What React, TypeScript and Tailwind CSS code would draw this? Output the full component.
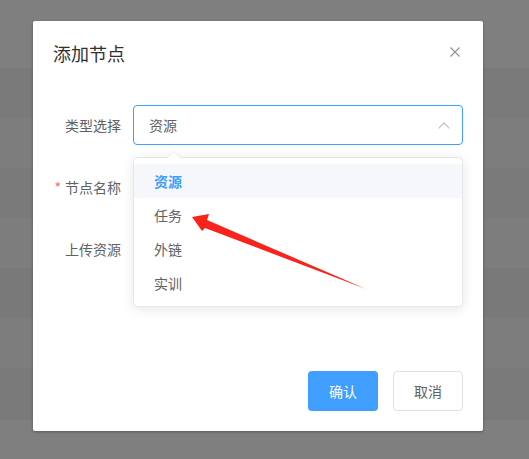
import React from "react";

const bands = [
  { h: "h-[68px]", c: "bg-[#7f7f7f]" },
  { h: "h-[50px]", c: "bg-[#7a7a7a]" },
  { h: "h-[50px]", c: "bg-[#7d7d7d]" },
  { h: "h-[50px]", c: "bg-[#7a7a7a]" },
  { h: "h-[50px]", c: "bg-[#7d7d7d]" },
  { h: "h-[50px]", c: "bg-[#797979]" },
  { h: "h-[50px]", c: "bg-[#7d7d7d]" },
  { h: "h-[52px]", c: "bg-[#7a7a7a]" },
  { h: "flex-1", c: "bg-[#7f7f7f]" },
];

const options = ["资源", "任务", "外链", "实训"];

export default function App() {
  return (
    <div
      className="relative w-[529px] h-[459px] overflow-hidden flex flex-col"
      style={{ fontFamily: '"Helvetica Neue", "Noto Sans CJK SC", "Noto Sans", sans-serif' }}
    >
      {bands.map((b, i) => (
        <div key={i} className={`${b.h} ${b.c} w-full`} />
      ))}

      {/* Dialog */}
      <div className="absolute left-[33px] top-[21px] w-[450px] h-[410px] bg-white rounded-[2px] shadow-[0_1px_3px_rgba(0,0,0,0.3)] flex flex-col">
        <div className="relative px-5 pt-5 pb-[10px]">
          <div className="text-[18px] leading-6 text-[#303133]">添加节点</div>
          <svg
            className="absolute left-[417px] top-[26px]"
            width="10"
            height="10"
            viewBox="0 0 10 10"
          >
            <path d="M0.5 0.5 L9.5 9.5 M9.5 0.5 L0.5 9.5" stroke="#909399" strokeWidth="1.2" fill="none" />
          </svg>
        </div>

        <div className="px-5 pt-[30px] flex flex-col gap-[22px]">
          {/* Row 1 */}
          <div className="flex h-10">
            <div className="w-20 pr-3 text-right text-sm leading-10 text-[#606266]">类型选择</div>
            <div className="relative w-[330px] h-10">
              <div className="h-10 border border-[#409EFF] rounded-[4px] flex items-center justify-between pl-[15px] pr-[12px]">
                <span className="text-sm text-[#606266]">资源</span>
                <svg width="12" height="7" viewBox="0 0 12 7">
                  <path d="M0.6 6.4 L6 1 L11.4 6.4" stroke="#c0c4cc" strokeWidth="1.3" fill="none" />
                </svg>
              </div>
              {/* Dropdown */}
              <div className="absolute left-0 top-[52px] w-[330px] z-10">
                <svg className="absolute left-[34px] top-[-6px]" width="14" height="7" viewBox="0 0 14 7">
                  <path d="M0 7 L7 0.5 L14 7 Z" fill="#ffffff" />
                  <path d="M0 7 L7 0.5 L14 7" fill="none" stroke="#E4E7ED" strokeWidth="1" />
                </svg>
                <div className="bg-white border border-[#E4E7ED] rounded-[4px] shadow-[0_2px_12px_0_rgba(0,0,0,0.1)] py-[6px]">
                  {options.map((o, i) => (
                    <div
                      key={o}
                      className={
                        i === 0
                          ? "h-[34px] leading-[34px] px-5 text-sm font-bold text-[#409EFF] bg-[#F5F7FA]"
                          : "h-[34px] leading-[34px] px-5 text-sm text-[#606266]"
                      }
                    >
                      {o}
                    </div>
                  ))}
                </div>
              </div>
            </div>
          </div>

          {/* Row 2 */}
          <div className="flex h-10">
            <div className="w-20 pr-3 text-right text-sm leading-10 text-[#606266]">
              <span className="text-[#F56C6C] mr-1">*</span>节点名称
            </div>
            <div className="w-[330px] h-10" />
          </div>

          {/* Row 3 */}
          <div className="flex h-10">
            <div className="w-20 pr-3 text-right text-sm leading-10 text-[#606266]">上传资源</div>
            <div className="w-[330px] h-10" />
          </div>
        </div>

        <div className="flex-1" />

        <div className="flex justify-end gap-[15px] px-5 pb-5">
          <button className="w-[70px] h-10 rounded-[4px] bg-[#409EFF] text-white text-sm">确认</button>
          <button className="w-[70px] h-10 rounded-[4px] border border-[#DCDFE6] bg-white text-[#606266] text-sm">取消</button>
        </div>
      </div>

      {/* Red annotation arrow */}
      <svg className="absolute left-0 top-0 pointer-events-none z-20" width="529" height="459" viewBox="0 0 529 459">
        <polygon
          points="192,217 209,214 207,220 366,289 205,228 202,231"
          fill="#f8231a"
        />
      </svg>
    </div>
  );
}
